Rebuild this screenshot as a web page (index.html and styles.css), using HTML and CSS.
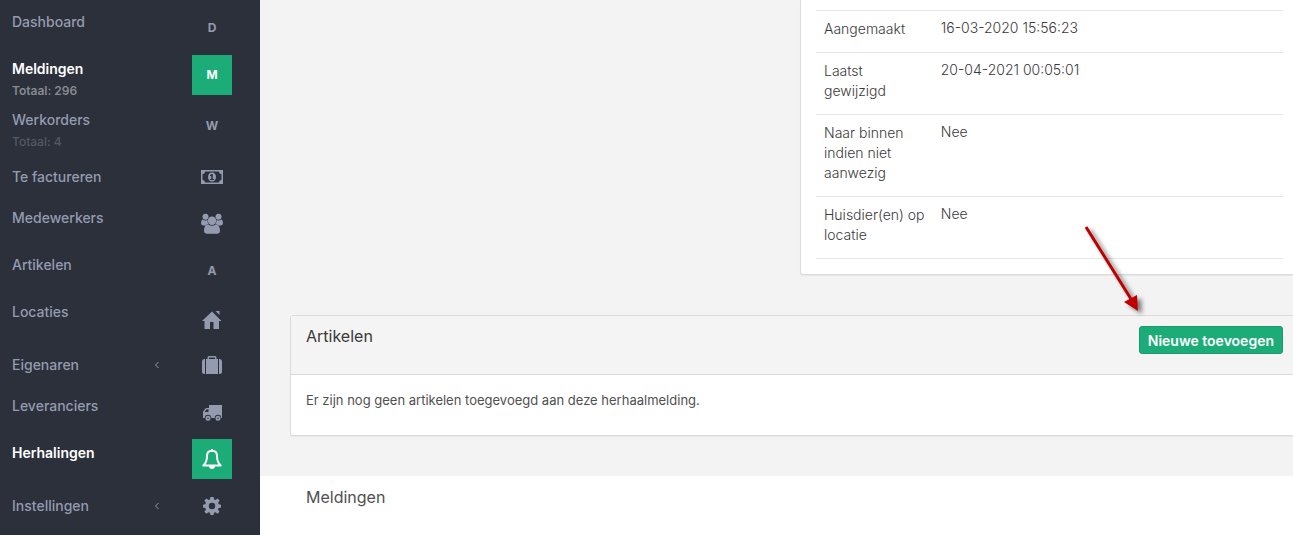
FILE: index.html
```html
<!DOCTYPE html>
<html lang="nl">
    <head>
        <meta charset="utf-8">
        <title>Herhalingen</title>
        <link rel="stylesheet" href="styles.css">
    </head>
    <body>
        <nav class="sidebar">
            <ul class="menu">
                <li><a href="#"><span class="title">Dashboard</span><span class="thumb">D</span></a></li>
                <li class="active"><a href="#"><span class="title">Meldingen<small>Totaal: 296</small></span><span class="thumb">M</span></a></li>
                <li><a href="#"><span class="title">Werkorders<small>Totaal: 4</small></span><span class="thumb">W</span></a></li>
                <li class="middle"><a href="#"><span class="title">Te factureren</span><span class="thumb">
                    <svg viewBox="0 0 24 24"><path fill-rule="evenodd" d="M1 5h22v14H1zM5 6.500a2.500 2.500 0 0 1-2.500 2.500v6A2.500 2.500 0 0 1 5 17.500h14a2.500 2.500 0 0 1 2.500-2.500V9A2.500 2.500 0 0 1 19 6.500z"/><path fill-rule="evenodd" d="M12 7.500c2.500 0 4 2 4 4.500s-1.500 4.500-4 4.500-4-2-4-4.500 1.500-4.500 4-4.500zM11.500 9L9.800 10.400l.7.900.8-.6V14H10v1h4v-1h-1.200V9z"/></svg>
                </span></a></li>
                <li><a href="#"><span class="title">Medewerkers</span><span class="thumb">
                    <svg viewBox="0 0 24 24"><circle cx="5.500" cy="4.700" r="3"/><circle cx="18.500" cy="4.700" r="3"/><path d="M2.500 7.600q2.800 1.500 5 .4-.3 2.500 1.200 4.200-2 .1-3 1.300H3q-2-.2-2-2.200Q1 8.200 2.500 7.600zM21.500 7.600q-2.800 1.500-5 .4.300 2.500-1.200 4.200 2 .1 3 1.300H21q2-.2 2-2.200Q23 8.200 21.500 7.600z"/><circle cx="12" cy="8.800" r="4.200"/><path d="M8.300 12.500q3.700 2.600 7.400 0c3 0 4.300 3 4.300 6 0 2.200-1.200 3.300-3 3.300H7c-1.800 0-3-1.100-3-3.300 0-3 1.300-6 4.300-6z"/></svg>
                </span></a></li>
                <li><a href="#"><span class="title">Artikelen</span><span class="thumb">A</span></a></li>
                <li><a href="#"><span class="title">Locaties</span><span class="thumb">
                    <svg viewBox="0 0 24 24"><path d="M12 5.500L2 15h2.500v8H10v-7h3.500v7H19v-8h2.500zM15.500 5h4v4z"/></svg>
                </span></a></li>
                <li class="middle"><a href="#"><span class="title">Eigenaren</span>
                    <svg class="arrow" viewBox="0 0 6 8"><path d="M4.500 1L1.500 4l3 3"/></svg>
                    <span class="thumb">
                    <svg viewBox="0 0 24 24"><path d="M5 6v15H4.500Q2 21 2 18.500V8.500Q2 6 4.500 6zM19 6v15h.5q2.500 0 2.500-2.500V8.500Q22 6 19.500 6z"/><path fill-rule="evenodd" d="M6 6h1.500V4.500Q7.500 3 9 3h6q1.500 0 1.500 1.500V6H18v15H6zM9 4.500V6h6V4.500z"/></svg>
                </span></a></li>
                <li><a href="#"><span class="title">Leveranciers</span><span class="thumb">
                    <svg viewBox="0 0 24 24"><path fill-rule="evenodd" d="M9 5H22v13h-.8a3.200 3.200 0 0 0-6.400 0h-3.600a3.200 3.200 0 0 0-6.400 0H3v-6.500L6 8h3zM8.500 9.300H6.700L4.500 12h4z"/><path fill-rule="evenodd" d="M8 15.800a2.500 2.500 0 1 1 0 5 2.500 2.500 0 0 1 0-5zm0 1.700a.8.8 0 1 0 0 1.600.8.800 0 0 0 0-1.600zM18 15.800a2.500 2.500 0 1 1 0 5 2.500 2.500 0 0 1 0-5zm0 1.700a.8.8 0 1 0 0 1.600.8.800 0 0 0 0-1.600z"/></svg>
                </span></a></li>
                <li class="active"><a href="#"><span class="title">Herhalingen</span><span class="thumb">
                    <svg viewBox="0 0 24 24"><path class="line" d="M12 3.800c-3.500 0-5 2.500-5 5.200 0 5-1.400 7.500-3.700 9.500h17.400C18.400 16.500 17 14 17 9c0-2.700-1.500-5.200-5-5.200z"/><path d="M11 2h2v2.500h-2zM9 19h6q-.2 3-3 3t-3-3z"/></svg>
                </span></a></li>
                <li class="middle"><a href="#"><span class="title">Instellingen</span>
                    <svg class="arrow" viewBox="0 0 6 8"><path d="M4.500 1L1.500 4l3 3"/></svg>
                    <span class="thumb">
                    <svg viewBox="0 0 24 24"><path fill-rule="evenodd" d="M10.400 3h3.200l.5 2.500 1.300.6 2.200-1.500 2 2-1.500 2.200.6 1.500 2.300.4v2.900l-2.400.4-.6 1.500 1.500 2.200-2 2-2.200-1.500-1.300.6-.4 2.200h-3.200l-.4-2.200-1.500-.6-2.100 1.500-2-2L5.900 15.500l-.6-1.500L3 13.600v-2.900l2.300-.4.600-1.500-1.500-2.200 2-2 2.200 1.500 1.300-.6zM12 8.800a3.200 3.200 0 1 0 0 6.400 3.200 3.200 0 0 0 0-6.400z"/></svg>
                </span></a></li>
            </ul>
        </nav>
        <main class="content">
            <div class="columns">
                <section class="card details">
                    <table>
                        <tr><th scope="row">Aangemaakt</th><td>16-03-2020 15:56:23</td></tr>
                        <tr><th scope="row">Laatst gewijzigd</th><td>20-04-2021 00:05:01</td></tr>
                        <tr><th scope="row">Naar binnen indien niet aanwezig</th><td>Nee</td></tr>
                        <tr><th scope="row">Huisdier(en) op locatie</th><td>Nee</td></tr>
                    </table>
                </section>
            </div>
            <section class="card articles">
                <header>
                    <h2>Artikelen</h2>
                    <div class="action">
                        <button type="button">Nieuwe toevoegen</button>
                        <svg class="pointer" viewBox="0 0 70 100">
                            <path class="shaft" d="M7 7L52 79"/>
                            <path class="head" d="M45 82L58 75L59 91z"/>
                        </svg>
                    </div>
                </header>
                <p>Er zijn nog geen artikelen toegevoegd aan deze herhaalmelding.</p>
            </section>
            <section class="reports">
                <h2>Meldingen</h2>
            </section>
        </main>
    </body>
</html>
```

FILE: styles.css
```css
* {
    box-sizing: border-box;
}
body {
    margin: 0;
    display: flex;
    height: 100vh;
    overflow: hidden;
    font-family: Inter, "Liberation Sans", sans-serif;
    font-size: 14px;
    line-height: 20px;
    color: #505050;
    background: #f3f3f3;
}

/* sidebar */
.sidebar {
    flex: 0 0 260px;
    padding: 8px 28px 0 12px;
    background: #2b303b;
}
.menu {
    list-style: none;
    margin: 0;
    padding: 0;
    display: flex;
    flex-direction: column;
    gap: 7px;
}
.menu a {
    display: flex;
    align-items: flex-start;
    color: #949baf;
    font-weight: 500;
    text-decoration: none;
}
.title {
    flex: 1;
    line-height: 28px;
}
.title small {
    display: block;
    font-size: 12px;
    line-height: 16px;
    color: #555963;
}
.middle a {
    align-items: center;
}
.arrow {
    width: 6px;
    height: 8px;
    margin-right: 32px;
    fill: none;
    stroke: #949baf;
}
.thumb {
    width: 40px;
    height: 40px;
    display: flex;
    align-items: center;
    justify-content: center;
    font-size: 12px;
    font-weight: 700;
}
.thumb svg {
    width: 24px;
    height: 24px;
    fill: currentColor;
}
.thumb .line {
    fill: none;
    stroke: currentColor;
    stroke-width: 2;
    stroke-linejoin: round;
}
.active a {
    color: #fff;
    font-weight: 600;
}
.active small {
    color: #888a91;
}
.active .thumb {
    background: #1bac78;
}

/* content, runs a little past the right edge */
.content {
    flex: 1;
    margin-right: -6px;
    display: flex;
    flex-direction: column;
}
.columns {
    display: grid;
    grid-template-columns: 1fr 1fr;
    gap: 11px;
    padding-left: 30px;
}
.card {
    background: #fff;
    border: 1px solid #dbdbdb;
    border-radius: 3px;
    box-shadow: 0 1px 1px rgba(0, 0, 0, 0.05);
}
.details {
    grid-column: 2;
    padding: 10px 15px 15px;
    border-top: 0;
    border-radius: 0 0 3px 3px;
}
.details table {
    width: 100%;
    table-layout: fixed;
    border-collapse: separate;
    border-spacing: 0;
    border-top: 1px solid #e6e6e6;
    color: #3a3a3a;
}
.details th, .details td {
    padding: 8px 7px 13px 8px;
    border-bottom: 1px solid #e6e6e6;
    font-weight: 300;
    text-align: left;
    vertical-align: top;
}
.details th {
    width: 25%;
}
.details td {
    padding-top: 7px;
}
h2 {
    margin: 0;
    font-size: 16px;
    font-weight: 400;
    line-height: 20px;
}
.articles {
    margin: 40px 0 40px 30px;
}
.articles header {
    display: flex;
    justify-content: space-between;
    align-items: flex-start;
    padding: 10px 15px 20px;
    border-bottom: 1px solid #dbdbdb;
    border-radius: 3px 3px 0 0;
    background: #f4f4f4;
}
.articles h2 {
    color: #3a3a3a;
}
.articles p {
    margin: 0;
    padding: 15px 15px 25px;
    font-size: 13px;
}
.action {
    position: relative;
    display: flex;
}
button {
    height: 28px;
    padding: 0 8px;
    border: 1px solid #189a6c;
    border-radius: 3px;
    background: #1bac78;
    color: #fff;
    font-family: inherit;
    font-size: 14px;
    font-weight: 600;
    cursor: pointer;
}
.pointer {
    position: absolute;
    left: -60px;
    bottom: 34px;
    width: 70px;
    height: 100px;
    pointer-events: none;
    filter: drop-shadow(4px 3px 2px rgba(0, 0, 0, 0.5));
}
.shaft {
    fill: none;
    stroke: #c00000;
    stroke-width: 3;
}
.head {
    fill: #c00000;
}
.reports {
    flex: 1;
    padding: 11px 46px;
    background: #fff;
}
```
